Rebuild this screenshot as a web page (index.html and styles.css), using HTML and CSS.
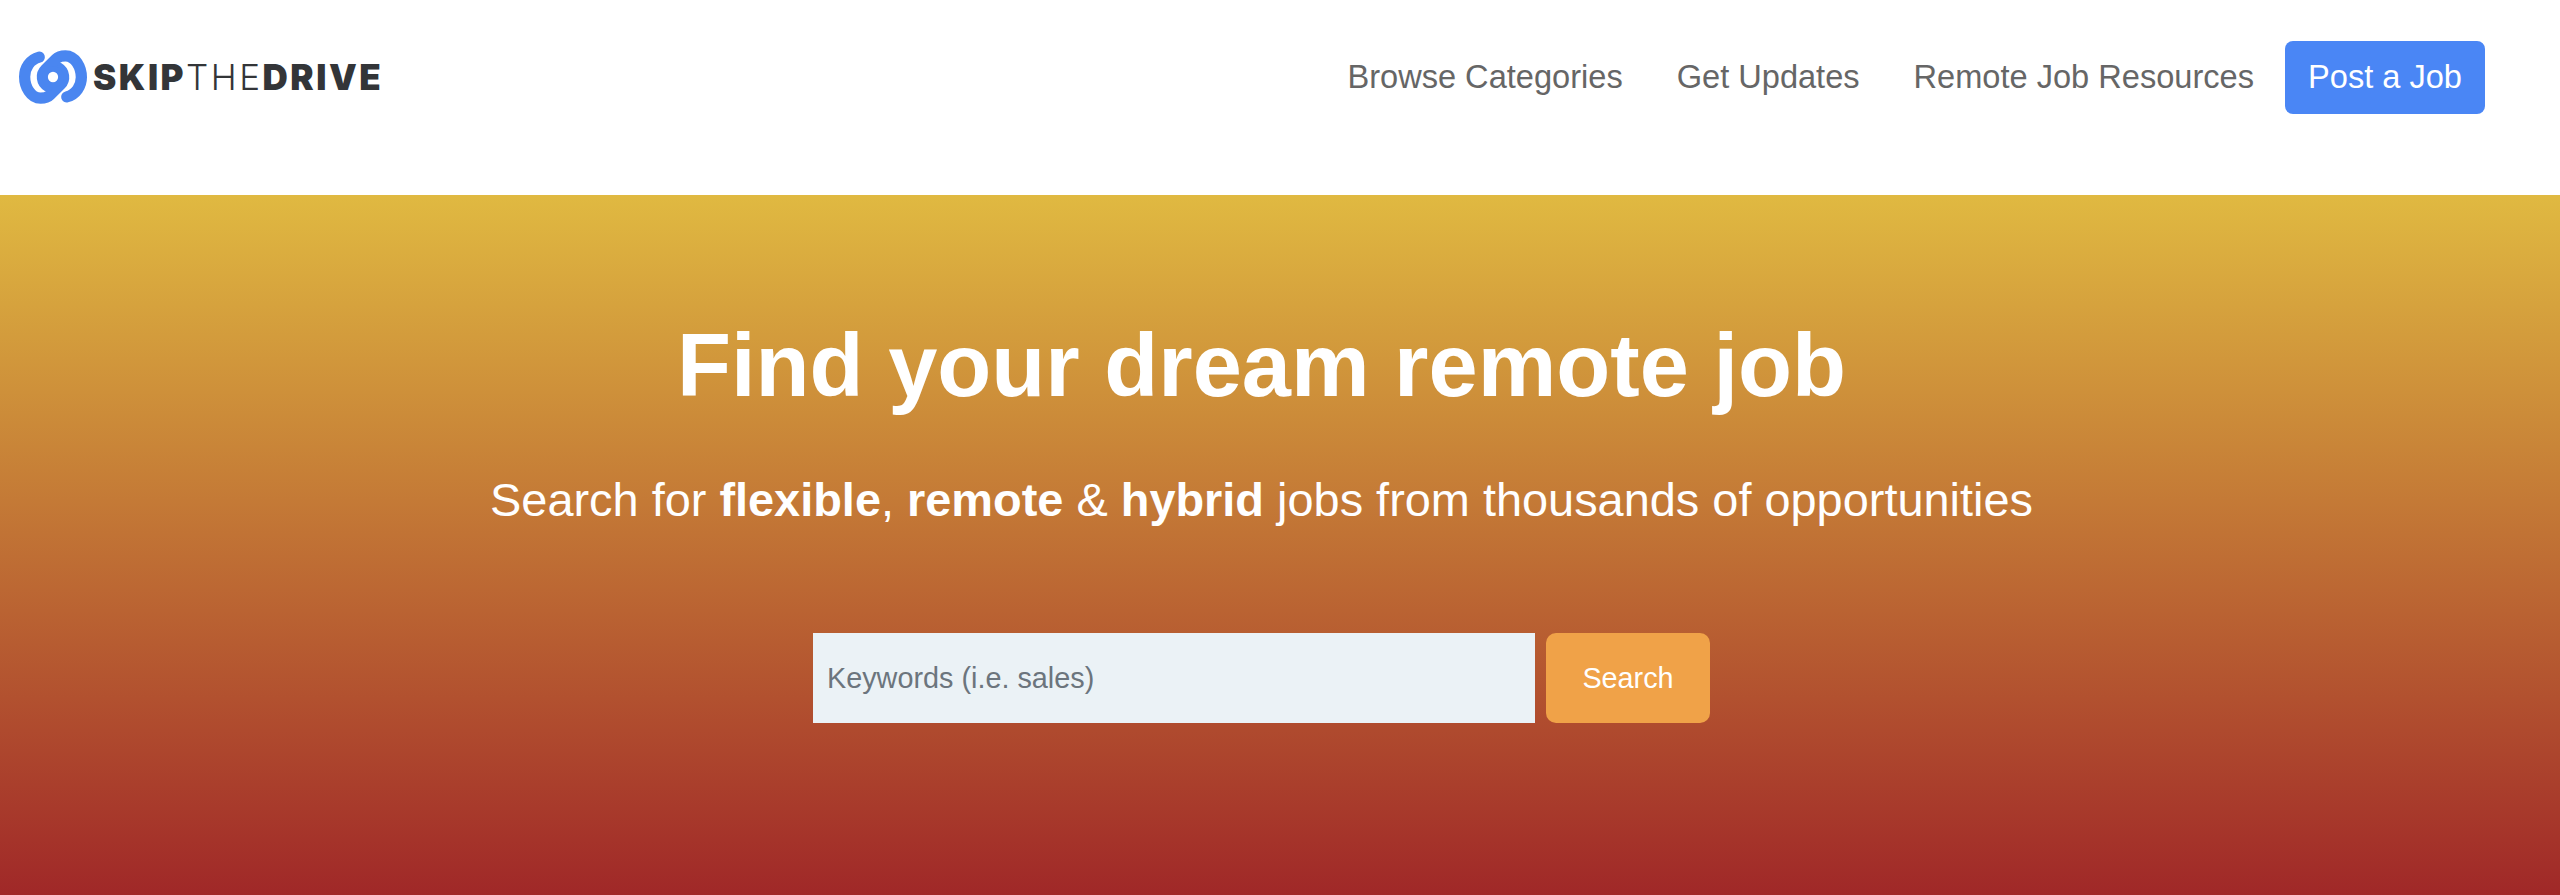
FILE: index.html
```html
<!DOCTYPE html>
<html lang="en">
<head>
    <meta charset="UTF-8">
    <title>SkipTheDrive</title>
    <link rel="stylesheet" href="styles.css">
</head>
<body>
    <header class="site-header">
        <a class="logo" href="#">
            <svg class="logo-icon" width="68" height="54" viewBox="27 30 205 162">
                <path class="link" d="M88 51 C60 58 44 84 44 110 C44 140 62 175 92 175 C104 175 112 174 120 165.7 L152.1 133.6 A32 32 0 0 0 145.5 83.3"/>
                <path class="link" transform="rotate(180 129.5 111)" d="M88 51 C60 58 44 84 44 110 C44 140 62 175 92 175 C104 175 112 174 120 165.7 L152.1 133.6 A32 32 0 0 0 145.5 83.3"/>
                <circle class="link-hole" cx="129.5" cy="111" r="24"/>
            </svg>
            <span class="logo-text"><b>SKIP</b>THE<b>DRIVE</b></span>
        </a>
        <nav class="main-nav">
            <a href="#">Browse Categories</a>
            <a href="#">Get Updates</a>
            <a href="#">Remote Job Resources</a>
            <a class="post-btn" href="#">Post a Job</a>
        </nav>
    </header>

    <section class="hero">
        <h1>Find your dream remote job</h1>
        <p>Search for <b>flexible</b>, <b>remote</b> &amp; <b>hybrid</b> jobs from thousands of opportunities</p>
        <form class="search-form">
            <input type="text" placeholder="Keywords (i.e. sales)">
            <button type="button">Search</button>
        </form>
    </section>
</body>
</html>
```

FILE: styles.css
```css
* {
    box-sizing: border-box;
}
html, body {
    height: 100%;
}
body {
    margin: 0;
    display: flex;
    flex-direction: column;
    overflow: hidden;
    font-family: "Liberation Sans", Arial, sans-serif;
    background: #fff;
}
a {
    text-decoration: none;
}

.site-header {
    height: 195px;
    flex-shrink: 0;
    display: flex;
    justify-content: space-between;
    align-items: flex-start;
    padding: 41px 75px 0 19px;
}
.logo {
    display: flex;
    align-items: center;
    gap: 6px;
    margin-top: 9px;
}
.link {
    fill: none;
    stroke: #4a86f0;
    stroke-width: 34;
    stroke-linecap: round;
}
.link-hole {
    fill: #fff;
    stroke: #4a86f0;
    stroke-width: 17;
}
.logo-text {
    font-family: "Inter", sans-serif;
    font-size: 35px;
    font-weight: 300;
    letter-spacing: 2.5px;
    color: #333538;
}
.logo-text b {
    font-weight: 900;
}
.main-nav {
    display: flex;
    align-items: center;
}
.main-nav a {
    padding-bottom: 2px;
    font-size: 32.6px;
    color: #666;
    margin-right: 54px;
}
.main-nav .post-btn {
    margin: 0 0 0 -23px;
    height: 73px;
    width: 200px;
    display: flex;
    align-items: center;
    justify-content: center;
    color: #fff;
    background: #4a86f5;
    border-radius: 8px;
}

.hero {
    flex: 1;
    display: flex;
    flex-direction: column;
    align-items: center;
    padding-right: 37px;
    color: #fff;
    background: linear-gradient(#e0b941, #a02828);
}
.hero h1 {
    margin: 116px 0 0;
    font-size: 88.4px;
    line-height: 110px;
}
.hero p {
    margin: 50px 0 0;
    font-size: 46.9px;
    line-height: 58px;
}
.search-form {
    display: flex;
    gap: 11px;
    margin-top: 104px;
}
.search-form input {
    width: 722px;
    height: 90px;
    padding: 0 14px;
    border: none;
    border-radius: 0;
    font: 28.8px "Liberation Sans", Arial, sans-serif;
    background: #ebf2f6;
}
.search-form input::placeholder {
    color: #6c757d;
}
.search-form button {
    width: 164px;
    height: 90px;
    border: none;
    border-radius: 10px;
    font: 28.8px "Liberation Sans", Arial, sans-serif;
    color: #fff;
    background: #f0a248;
}
```
